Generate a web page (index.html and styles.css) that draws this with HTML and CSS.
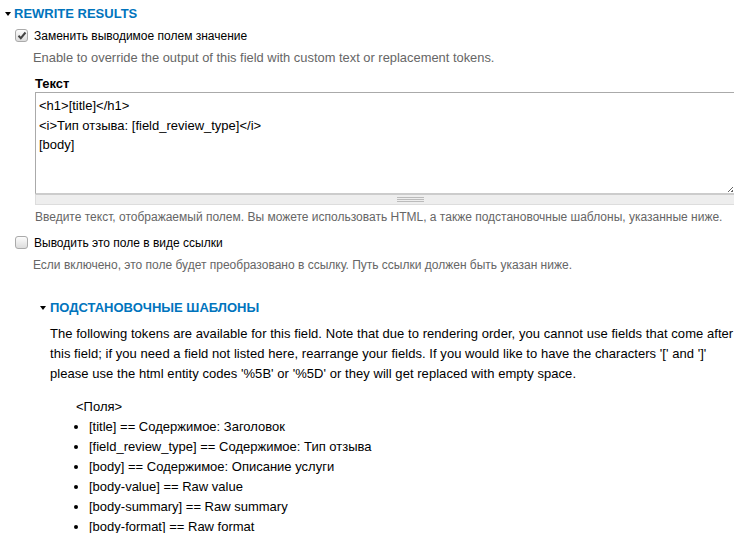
FILE: index.html
```html
<!DOCTYPE html>
<html>
<head>
<meta charset="utf-8">
<link rel="stylesheet" href="styles.css">
</head>
<body>
<div class="page">
  <div class="legend">
    <span class="tri"></span><span class="legend-text">REWRITE RESULTS</span>
  </div>
  <div class="item">
    <div class="check-row">
      <span class="cb checked"><svg width="10" height="9" viewBox="0 0 10 9"><path d="M1.5 4.8 L3.8 7.2 L8.5 1.5" fill="none" stroke="#444" stroke-width="2"/></svg></span>
      <span class="label">Заменить выводимое полем значение</span>
    </div>
    <div class="desc desc-en">Enable to override the output of this field with custom text or replacement tokens.</div>
  </div>
  <div class="textitem">
    <div class="tlabel">Текст</div>
    <div class="textarea">
      <div>&lt;h1&gt;[title]&lt;/h1&gt;</div>
      <div>&lt;i&gt;Тип отзыва: [field_review_type]&lt;/i&gt;</div>
      <div>[body]</div>
      <span class="resize"></span>
    </div>
    <div class="grippie"><span class="grip"></span></div>
    <div class="desc2">Введите текст, отображаемый полем. Вы можете использовать HTML, а также подстановочные шаблоны, указанные ниже.</div>
  </div>
  <div class="item item2">
    <div class="check-row">
      <span class="cb"></span>
      <span class="label">Выводить это поле в виде ссылки</span>
    </div>
    <div class="desc">Если включено, это поле будет преобразовано в ссылку. Путь ссылки должен быть указан ниже.</div>
  </div>
  <div class="sub">
    <div class="legend">
      <span class="tri"></span><span class="legend-text">ПОДСТАНОВОЧНЫЕ ШАБЛОНЫ</span>
    </div>
    <p class="para">The following tokens are available for this field. Note that due to rendering order, you cannot use fields that come after this field; if you need a field not listed here, rearrange your fields. If you would like to have the characters '[' and ']' please use the html entity codes '%5B' or '%5D' or they will get replaced with empty space.</p>
    <div class="tokens">
      <div class="group">&lt;Поля&gt;</div>
      <ul>
        <li>[title] == Содержимое: Заголовок</li>
        <li>[field_review_type] == Содержимое: Тип отзыва</li>
        <li>[body] == Содержимое: Описание услуги</li>
        <li>[body-value] == Raw value</li>
        <li>[body-summary] == Raw summary</li>
        <li>[body-format] == Raw format</li>
      </ul>
    </div>
  </div>
</div>
</body>
</html>
```
FILE: styles.css
```css
html, body {
  margin: 0;
  padding: 0;
  background: #fff;
}
body {
  font-family: "Liberation Sans", Arial, sans-serif;
  font-size: 13px;
  color: #000;
  width: 734px;
  overflow: hidden;
}
.page {
  padding: 4px 0 0 5px;
}
.legend {
  display: flex;
  align-items: center;
  height: 18px;
}
.tri {
  width: 0;
  height: 0;
  border-left: 3.5px solid transparent;
  border-right: 3.5px solid transparent;
  border-top: 4px solid #000;
  margin-right: 3px;
  margin-top: 1px;
}
.legend-text {
  color: #0074bd;
  font-weight: bold;
  font-size: 13px;
}
.sub .legend-text {
  margin-left: 1px;
}
.item {
  margin-left: 10px;
  margin-top: 6px;
}
.check-row {
  display: flex;
  align-items: center;
  height: 16px;
}
.cb {
  width: 11px;
  height: 11px;
  border: 1px solid #aaa;
  border-radius: 3px;
  background: linear-gradient(#fcfcfc, #dcdcdc);
  margin-right: 6px;
  margin-top: -2px;
  display: flex;
  align-items: center;
  justify-content: center;
  box-sizing: content-box;
}
.label {
  font-size: 12px;
  color: #000;
}
.desc {
  color: #666;
  font-size: 12px;
  margin: 7px 0 0 18px;
}
.desc-en {
  font-size: 12.9px;
  margin-top: 6px;
}
.textitem {
  margin-left: 30px;
  margin-top: 11px;
}
.tlabel {
  font-weight: bold;
  font-size: 13px;
  height: 16px;
}
.textarea {
  position: relative;
  border: 1px solid #aaa;
  border-bottom-color: #ccc;
  border-right: none;
  height: 94px;
  padding: 3px 3px;
  line-height: 19.5px;
  font-size: 13px;
}
.resize {
  position: absolute;
  right: 1px;
  bottom: 1px;
  width: 5px;
  height: 5px;
  background: linear-gradient(135deg, transparent 45%, #666 45%, #666 55%, transparent 55%, transparent 75%, #666 75%);
}
.grippie {
  height: 9px;
  background: #eee;
  border: 1px solid #ddd;
  border-top-color: #ccc;
  border-right: none;
  display: flex;
  justify-content: center;
  align-items: center;
}
.grip {
  width: 27px;
  height: 5px;
  border-top: 1px solid #bbb;
  border-bottom: 1px solid #bbb;
  box-sizing: border-box;
  background: linear-gradient(#eee 1px, #bbb 1px, #bbb 2px, #eee 2px);
  margin-left: 50px;
}
.desc2 {
  color: #666;
  font-size: 12px;
  margin-top: 5px;
}
.item2 {
  margin-top: 11px;
}
.sub {
  margin-left: 35px;
  margin-top: 26px;
}
.para {
  margin: 8px 0 0 10px;
  line-height: 20px;
  font-size: 13px;
  letter-spacing: 0.05px;
}
.tokens {
  margin: 13px 0 0 36px;
  line-height: 20px;
}
.tokens ul {
  margin: 0;
  padding: 0 0 0 13px;
}
.tokens li {
  list-style: disc;
}
```
